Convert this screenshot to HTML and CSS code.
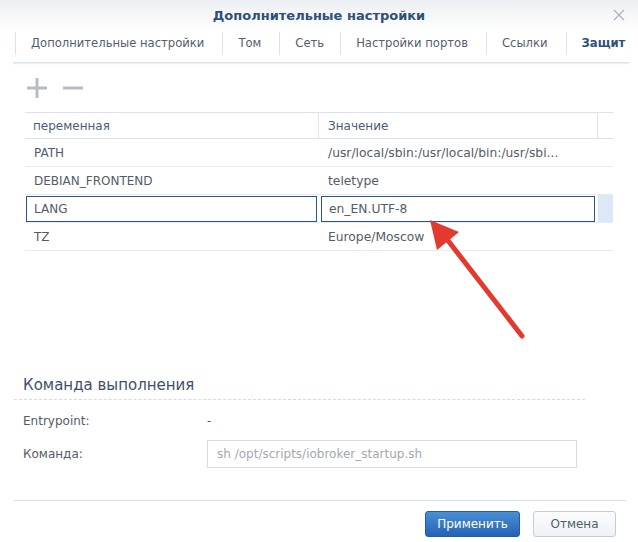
FILE: index.html
```html
<!DOCTYPE html>
<html lang="ru">
<head>
<meta charset="utf-8">
<title>Дополнительные настройки</title>
<link rel="stylesheet" href="styles.css">
</head>
<body>
<div class="dialog">
  <div class="header">
    <span class="spacer"></span>
    <h1 class="title">Дополнительные настройки</h1>
    <span class="close"><svg width="12" height="12" viewBox="0 0 12 12"><path d="M1 1L11 11M11 1L1 11" stroke="#b0b4b9" stroke-width="1.4" fill="none"/></svg></span>
  </div>
  <div class="tabs">
    <div class="tab">Дополнительные настройки</div>
    <div class="tab">Том</div>
    <div class="tab">Сеть</div>
    <div class="tab">Настройки портов</div>
    <div class="tab">Ссылки</div>
    <div class="tab active">Защит</div>
  </div>
  <div class="toolbar">
    <svg class="tool" width="20" height="20" viewBox="0 0 20 20"><rect x="0" y="8.5" width="20" height="3" fill="#b8bcc1"/><rect x="8.5" y="0" width="3" height="20" fill="#b8bcc1"/></svg>
    <svg class="tool" width="20" height="20" viewBox="0 0 20 20"><rect x="0" y="8.5" width="20" height="3" fill="#b8bcc1"/></svg>
  </div>
  <div class="grid">
    <div class="row head">
      <div class="cell c1">переменная</div>
      <div class="cell c2">Значение</div>
      <div class="cell c3"></div>
    </div>
    <div class="row">
      <div class="cell c1">PATH</div>
      <div class="cell c2">/usr/local/sbin:/usr/local/bin:/usr/sbi...</div>
      <div class="cell c3"></div>
    </div>
    <div class="row">
      <div class="cell c1">DEBIAN_FRONTEND</div>
      <div class="cell c2">teletype</div>
      <div class="cell c3"></div>
    </div>
    <div class="row selected">
      <div class="cell c1"><span class="edit">LANG</span></div>
      <div class="cell c2"><span class="edit">en_EN.UTF-8</span></div>
      <div class="cell c3"></div>
    </div>
    <div class="row">
      <div class="cell c1">TZ</div>
      <div class="cell c2">Europe/Moscow</div>
      <div class="cell c3"></div>
    </div>
  </div>
  <div class="section">
    <div class="section-title">Команда выполнения</div>
    <div class="form-row first">
      <span class="label">Entrypoint:</span>
      <span class="value">-</span>
    </div>
    <div class="form-row">
      <span class="label">Команда:</span>
      <div class="input">sh /opt/scripts/iobroker_startup.sh</div>
    </div>
  </div>
  <div class="footer">
    <button class="btn primary">Применить</button>
    <button class="btn">Отмена</button>
  </div>
  <svg class="arrow" width="638" height="542" viewBox="0 0 638 542">
    <line x1="446" y1="238" x2="522" y2="336" stroke="#e23a2e" stroke-width="5" stroke-linecap="round"/>
    <polygon points="430,220 459,232 437,250" fill="#e23a2e"/>
  </svg>
</div>
</body>
</html>
```
FILE: styles.css
```css
* { box-sizing: border-box; }
html, body { margin: 0; padding: 0; }
body {
  width: 638px;
  height: 542px;
  background: #ffffff;
  font-family: "DejaVu Sans", Verdana, sans-serif;
  font-size: 12px;
  color: #535c66;
  overflow: hidden;
}
.dialog {
  position: relative;
  width: 638px;
  height: 542px;
  display: flex;
  flex-direction: column;
}
.header {
  height: 32px;
  display: grid;
  grid-template-columns: 1fr auto 1fr;
  align-items: center;
  background: linear-gradient(#eceff3, #ffffff);
}
.title {
  margin: 0;
  font-size: 13px;
  font-weight: bold;
  color: #2f5077;
  line-height: 16px;
  padding-bottom: 1px;
}
.close {
  justify-self: end;
  margin-right: 13px;
  display: flex;
  margin-top: -3px;
}
.tabs {
  margin: 0 9px 0 13px;
  padding: 0 0 7px 2px;
  display: flex;
  white-space: nowrap;
  overflow: hidden;
  border-bottom: 1px solid #dfe4ea;
  box-shadow: 0 1px 1px rgba(200,208,218,0.35);
}
.tab {
  height: 23px;
  line-height: 23px;
  padding: 0 18px 0 15px;
  border-left: 1px solid #dde2e8;
  color: #56606b;
  font-size: 11.6px;
  flex: none;
}
.tab:nth-child(3) { padding-right: 16px; }
.tab:nth-child(5) { padding-right: 18px; }
.tab.active {
  font-weight: bold;
  color: #2f5077;
  padding: 0 0 0 15px;
}
.toolbar {
  display: flex;
  gap: 16px;
  padding: 15px 0 14px 27px;
  height: 49px;
}
.tool { display: block; }
.grid {
  margin-left: 25px;
  width: 588px;
}
.row {
  display: grid;
  grid-template-columns: 294px 279px 15px;
  height: 28px;
  border-bottom: 1px solid #e7eaee;
}
.row.head {
  height: 27px;
  border-top: 1px solid #dbe2ea;
  border-bottom: 1px solid #dbe2ea;
  color: #4c5d72;
}
.cell {
  padding-left: 9px;
  display: flex;
  align-items: center;
  white-space: nowrap;
  overflow: hidden;
}
.c2 { font-size: 12.3px; }
.head .c1, .head .c2 { border-right: 1px solid #e1e6ec; }
.head .cell { padding-left: 8px; }
.row.head .c2 { padding-left: 9px; font-size: 12px; }
.selected .cell { padding: 0; }
.selected .c1 { padding: 1px 2px 0 1px; }
.selected .c2 { padding: 1px 3px 0 2px; }
.selected .c3 { background: #dce8f7; }
.edit {
  flex: 1;
  height: 26px;
  display: flex;
  align-items: center;
  border: 1px solid #2e5584;
  padding-left: 7px;
}
.section {
  margin: 124px 53px 0 14px;
}
.section-title {
  font-size: 15px;
  line-height: 20px;
  color: #3e5069;
  padding: 0 0 4px 9px;
  border-bottom: 1px dashed #d3dae2;
}
.form-row {
  display: flex;
  align-items: center;
  padding-left: 9px;
  margin-top: 7px;
  height: 28px;
}
.form-row.first {
  margin-top: 9px;
  height: 24px;
}
.label {
  width: 184px;
  flex: none;
  color: #535c66;
}
.value { color: #535c66; }
.input {
  width: 370px;
  height: 28px;
  border: 1px solid #d5dbe2;
  padding-left: 9px;
  display: flex;
  align-items: center;
  color: #a2a8af;
}
.footer {
  margin: 32px 12px 0 14px;
  border-top: 1px solid #dbe1e8;
  padding: 10px 10px 0 0;
  display: flex;
  justify-content: flex-end;
  gap: 13px;
}
.btn {
  height: 26px;
  font-family: "DejaVu Sans", Verdana, sans-serif;
  font-size: 12px;
  border-radius: 3px;
  border: 1px solid #c4ccd6;
  background: linear-gradient(#fdfdfe, #eef1f5);
  color: #525c68;
  padding: 0;
  width: 83px;
}
.btn.primary {
  width: 95px;
  border-color: #225ea6;
  background: linear-gradient(#4a8ed7, #2463b2);
  color: #ffffff;
}
.arrow {
  position: absolute;
  top: 0;
  left: 0;
  pointer-events: none;
}
```
